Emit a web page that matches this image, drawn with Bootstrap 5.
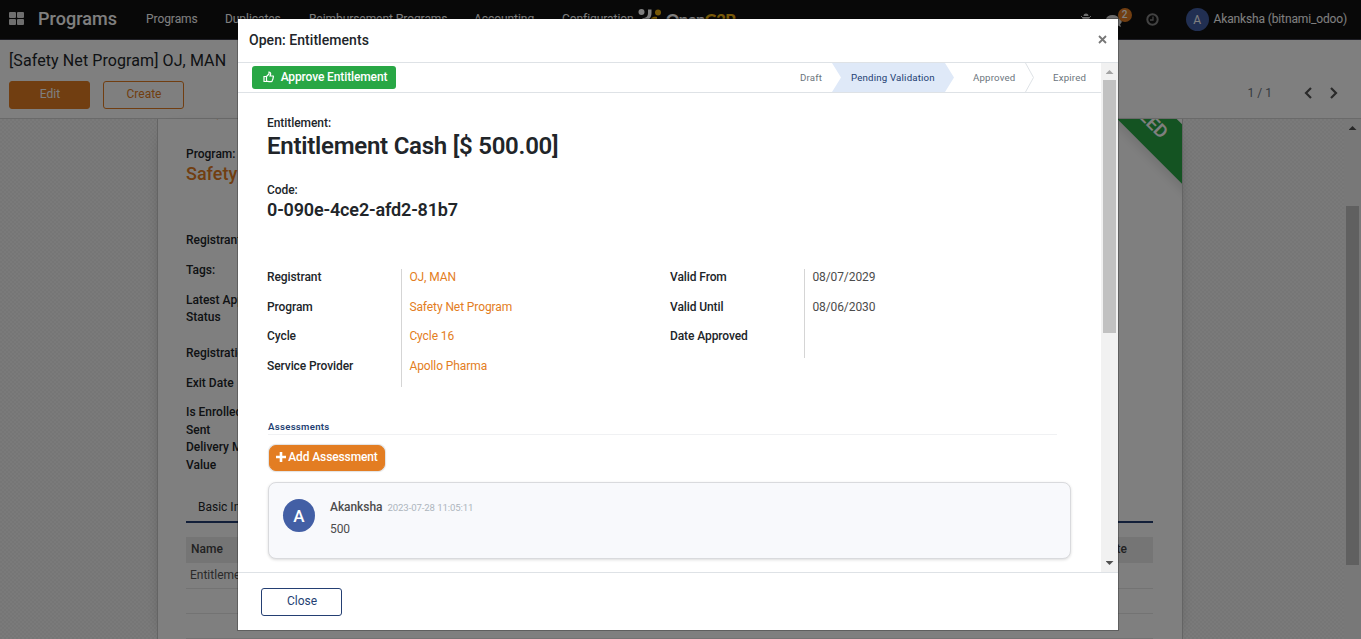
<!DOCTYPE html>
<html lang="en">
<head>
<meta charset="utf-8">
<meta name="viewport" content="width=device-width, initial-scale=1">
<title>Programs - Entitlements</title>
<link href="https://cdn.jsdelivr.net/npm/bootstrap@5.3.0/dist/css/bootstrap.min.css" rel="stylesheet">
<style>
:root{--brand:#e37d22;--navy:#243f73;--line:#dee2e6}
body{font-family:Roboto,"Liberation Sans",sans-serif;font-size:12px;line-height:18px;color:#212529;height:639px;overflow:hidden}
svg{display:block;flex:none}
a{text-decoration:none}
/* top bar */
.topbar{height:40px;background:#101010;border-bottom:1px solid #3a3a48;color:#fff;font-size:12px;padding:0 14px 2px 9px}
.apps{width:15px;margin-right:14px}
.brandname{font-size:18px;font-weight:500;width:108px;letter-spacing:.05px}
.m1{width:79px}.m2{width:84px}.m3{width:165px}.m4{width:88px}.m5{width:76px}
.m1,.m2,.m3,.m4,.m5{letter-spacing:-.06px}
.logotext{font-family:Lato,sans-serif;font-weight:900;font-size:16.5px;letter-spacing:-.5px;margin-left:4px;padding-top:2px}
.gold{color:#f0b310}
.face{border-radius:50%;background:#435fa5;color:#fff;display:flex;align-items:center;justify-content:center;flex:none}
.face-sm{width:23px;height:23px;font-size:12px;margin:2px 5px 0 27px}
.userlabel{letter-spacing:-.14px}
.bug{margin-top:1px}
.chat{position:relative;width:18px;margin:7px 15px 0 14px}
.chat svg{margin-top:-1px}
.pill{position:absolute;left:12px;top:-8px;width:14px;height:14px;border-radius:7px;background:var(--brand);font-size:10px;font-weight:500;line-height:14px;text-align:center}
.clock{margin:2px 0 0 7px}
/* control panel */
.panel{height:79px;background:#fff;border-bottom:1px solid #d5d5d5;padding:10px 22px 0 9px}
.crumb{font-size:16px;line-height:22px;margin-bottom:9px;letter-spacing:.09px}
.btn{--bs-btn-font-size:12px;--bs-btn-border-radius:3px;line-height:16px}
.btn-brand,.btn-brand:hover{background:var(--brand);border-color:var(--brand);color:#fff}
.btn-line{border-color:var(--brand);color:var(--brand);margin-left:13px}
.btn-w{width:81px;height:28px;padding:3px 0 5px 1px}
/* record behind the dialog */
.stage{height:520px;background-color:#f4f4f4;background-image:conic-gradient(#ededed 25%,#f5f5f5 0 50%,#ededed 0 75%,#f5f5f5 0);background-size:4px 4px}
.paper{width:1026px;margin-left:157px;background:#fff;border:solid #c8c8c8;border-width:0 1px;padding:0 29px 0 28px;overflow:hidden;position:relative;box-shadow:0 5px 20px -15px #000}
.wm{font-weight:500}
.tight{letter-spacing:-.06px}
.head24{font-size:24px;font-weight:500;line-height:30px;margin-top:-26px;color:var(--brand)}
.head18{font-size:18px;font-weight:500;line-height:22px;color:var(--brand)}
.ribbon{position:absolute;left:855px;top:-35px;width:240px;height:42px;background:#28a745;color:#fff;transform:rotate(45deg);text-align:center;font-size:18px;line-height:39px;font-weight:600;box-shadow:0 5px 10px rgba(0,0,0,.1)}
.rec>div{line-height:17.5px}
.tabs{border-bottom:2px solid var(--navy);margin-top:18px}
.tabs span{padding:6px 12px 5px}
.list{margin-top:14px;font-size:12px}
.list th{background:#ebebeb;height:26px;padding:2px 5px 4px;font-weight:500;color:#444}
.list td{height:25px;padding:3px 4px;border-bottom:1px solid #e6e6e6;color:#555}
/* drawn scroll bars */
.sbar{width:17px;background:#f1f1f1;padding:0 2px;flex:none}
.thumb{background:#c1c1c1}
.tri-u,.tri-d{width:8px;height:4px;margin:0 auto;background:#a3a3a3;clip-path:polygon(50% 0,100% 100%,0 100%)}
.tri-d{clip-path:polygon(0 0,100% 0,50% 100%);background:#505050}
/* dialog */
.modal-dialog.entitle{width:882px;max-width:882px;margin:18px 0 0 237px}
.entitle .modal-content{border-radius:0;border:1px solid rgba(0,0,0,.25)}
.entitle .modal-header{height:44px;padding:0 11px 2px 11px;border-radius:0}
.entitle .modal-title{font-size:14px;font-weight:500;line-height:20px;letter-spacing:.05px}
.entitle .modal-body{height:509px;padding:0}
.entitle .modal-footer{height:58px;padding:0 0 0 23px;border-radius:0;justify-content:flex-start;align-items:center}
.entitle .modal-footer>*{margin:0}
.btn-navy{border-color:var(--navy);color:var(--navy)}
.status{height:30px;border-bottom:1px solid var(--line);padding-left:14px}
.btn-ok{width:144px;height:23px;padding:0 0 2px 2px;background:#28a745;color:#fff;letter-spacing:-.12px}
.steps{font-size:9.7px;color:#6c757d;height:29px;letter-spacing:.18px}
.steps>*{height:29px;display:flex;align-items:center}
.cur{background:#dfe9f8;color:var(--navy);width:122px;padding-left:19px;clip-path:polygon(0 0,113px 0,100% 50%,113px 100%,0 100%,9px 50%)}
.view{padding:21px 30px 0 29px}
.big{font-size:24px;line-height:30px;margin-top:-1px;font-weight:600;letter-spacing:-.25px}
.code{font-size:18px;line-height:24px;margin-top:-1px;font-weight:600;letter-spacing:-.15px}
.fields{grid-template-columns:403px 1fr;height:148px;margin-top:47px}
.pairs{display:grid;grid-template-columns:135px 1fr;align-self:start;letter-spacing:-.09px;line-height:16px}
.pairs .keys{border-right:1px solid #d5d5d5}
.pairs .keys>*,.pairs .vals>*{display:block;height:29.6px}
.pairs .vals{padding-left:7.400px;color:#4c4c4c}
.vals a{color:var(--brand)}
.sect{font-size:9.6px;font-weight:600;line-height:14px;color:var(--navy);border-bottom:1px solid #f0f1f3;width:789px;margin:3px 0 0 1px;letter-spacing:.3px}
.btn-add{width:116px;height:26px;padding:0 0 2px;--bs-btn-border-radius:7px;margin:10px 0 11px 2px;box-shadow:0 0 1px 1px rgba(0,0,0,.12);letter-spacing:-.12px}
.note{width:803px;height:77px;margin-left:1px;border:1px solid #d9dadd;border-radius:8px;background:#f8f9fc;padding:15px 14px;box-shadow:0 1px 3px rgba(0,0,0,.14);color:#4c4c4c}
.face-lg{width:32px;height:33px;font-size:17px;font-weight:500;margin:1px 15px 0 0}
.when{font-size:9.6px;color:#adb5bd;margin-left:5px;letter-spacing:-.1px}
</style>
<script src="https://cdn.jsdelivr.net/npm/bootstrap@5.3.0/dist/js/bootstrap.bundle.min.js"></script>
</head>
<body>
<nav class="topbar d-flex align-items-center">
  <svg class="apps" width="15" height="13" viewBox="0 0 15 13" fill="#ddd"><rect width="7" height="6" rx="1"/><rect x="8" width="7" height="6" rx="1"/><rect y="7" width="7" height="6" rx="1"/><rect x="8" y="7" width="7" height="6" rx="1"/></svg>
  <span class="brandname">Programs</span>
  <span class="m1">Programs</span><span class="m2">Duplicates</span><span class="m3">Reimbursement Programs</span><span class="m4">Accounting</span><span class="m5">Configuration</span>
  <svg width="24" height="24" viewBox="0 0 24 24"><circle cx="3.500" cy="5" r="3" fill="#fff"/><circle cx="20" cy="5.500" r="3" fill="#f0b310"/><path d="M10 2.500h3.500V6c0 5-3 8-9 8v-3c4 0 5.500-2 5.500-5z" fill="#fff"/><path d="M12 16c0-4 2-7 7-6-.5 2 1 3.500 4 3.500V16z" fill="#f0b310"/></svg>
  <span class="logotext">Open<span class="gold">G2P</span></span>
  <div class="d-flex align-items-center ms-auto">
    <svg class="bug" width="12" height="13" viewBox="0 0 12 13" fill="#ddd"><path d="M3.500 3a2.500 2.500 0 0 1 5 0zM2.500 4h7v7a3.500 2 0 0 1-7 0z"/><path d="M1 3l2 2h6l2-2M0 7.500h12M1 12l2-2h6l2 2" stroke="#ddd" fill="none"/></svg>
    <span class="chat"><svg width="16" height="13" viewBox="0 0 16 13" fill="#ddd"><ellipse cx="6.500" cy="4.500" rx="6.500" ry="4.500"/><path d="M13 3c4 2 3 5 1 6l1 3-4-2-4-1c4 0 6-3 6-6z"/></svg><span class="pill">2</span></span>
    <svg class="clock" width="13" height="13" viewBox="0 0 13 13" fill="none" stroke="#858585"><circle cx="6.500" cy="6.500" r="5.200" stroke-width="2"/><path d="M7 3.500V7H4" stroke-width="1.300"/></svg>
    <span class="face face-sm">A</span><span class="userlabel">Akanksha (bitnami_odoo)</span>
  </div>
</nav>
<header class="panel">
  <div class="crumb">[Safety Net Program] OJ, MAN</div>
  <div class="d-flex align-items-center">
    <button class="btn btn-brand btn-w">Edit</button><button class="btn btn-line btn-w">Create</button>
    <span class="ms-auto text-secondary mb-1">1 / 1</span>
    <svg class="mb-1" style="margin-left:32px" width="9" height="12" viewBox="0 0 9 12" fill="none" stroke="#555" stroke-width="2.200"><path d="M7 1L2 6l5 5"/></svg>
    <svg class="mb-1" style="margin-left:16px" width="10" height="12" viewBox="0 0 10 12" fill="none" stroke="#555" stroke-width="2.200"><path d="M2 1l5 5-5 5"/></svg>
  </div>
</header>
<main class="stage d-flex">
  <section class="paper">
    <div class="ribbon">ENROLLED</div>
    <div class="head24">OJ, MAN</div>
    <div class="wm" style="margin-top:22px">Program:</div>
    <div class="head18">Safety Net Program</div>
    <div class="rec wm">
      <div style="margin-top:47px">Registrant:</div>
      <div style="margin-top:12px">Tags:</div>
      <div style="margin-top:12.5px">Latest Application<br>Status</div>
      <div style="margin-top:18px">Registration Date</div>
      <div style="margin-top:12.5px">Exit Date</div>
      <div style="margin-top:12px">Is Enrolled Message<br>Sent<br>Delivery Mechanism<br>Value</div>
    </div>
    <div class="tabs d-flex"><span>Basic Information</span></div>
    <table class="list w-100">
      <thead><tr><th>Name</th><th class="text-end" style="padding-right:26px">End Date</th></tr></thead>
      <tbody><tr><td>Entitlement Cash</td><td></td></tr><tr><td></td><td></td></tr><tr><td></td><td></td></tr></tbody>
    </table>
  </section>
  <div class="sbar ms-auto"><div class="tri-u" style="margin-top:7px;background:#505050"></div><div class="thumb" style="height:359px;margin-top:76px"></div></div>
</main>

<div class="modal-backdrop show"></div>
<div class="modal d-block overflow-hidden" tabindex="-1" role="dialog">
  <div class="modal-dialog entitle">
    <div class="modal-content">
      <div class="modal-header">
        <h4 class="modal-title">Open: Entitlements</h4>
        <svg width="9" height="9" viewBox="0 0 9 9" stroke="#777" stroke-width="1.800"><path d="M1 1l7 7M8 1L1 8"/></svg>
      </div>
      <div class="modal-body d-flex">
        <div class="flex-grow-1">
          <div class="status d-flex align-items-center">
            <button class="btn btn-ok d-flex align-items-center justify-content-center wm"><svg style="margin-right:7px" width="11" height="12" viewBox="0 0 11 12" fill="none" stroke="#fff" stroke-width="1.200"><path d="M1 5.500h2.500v5H1zM3.500 5.500L6 3V1c2 0 2 2 1 4h3.200c.5 1 0 1.500-.2 2 .2 1-.2 1.500-.6 2 0 1-.4 1.500-1 1.700H6l-2.500-.5"/></svg>Approve Entitlement</button>
            <div class="steps d-flex ms-auto">
              <span style="width:32px">Draft</span><span class="cur">Pending Validation</span><span style="width:71px;padding-left:19px">Approved</span>
              <svg width="9" height="29" viewBox="0 0 9 29" fill="none" stroke="#dee2e6"><path d="M.5 0l8 14.500-8 14.500"/></svg><span style="width:67px;padding-left:19px">Expired</span>
            </div>
          </div>
          <div class="view">
            <div class="wm tight">Entitlement:</div>
            <div class="big">Entitlement Cash [$ 500.00]</div>
            <div class="wm tight" style="margin-top:20px">Code:</div>
            <div class="code">0-090e-4ce2-afd2-81b7</div>
            <div class="fields d-grid">
              <div class="pairs"><div class="keys wm"><span>Registrant</span><span>Program</span><span>Cycle</span><span>Service Provider</span></div>
                <div class="vals"><a href="#">OJ, MAN</a><a href="#">Safety Net Program</a><a href="#">Cycle 16</a><a href="#">Apollo Pharma</a></div></div>
              <div class="pairs"><div class="keys wm"><span>Valid From</span><span>Valid Until</span><span>Date Approved</span></div>
                <div class="vals"><span>08/07/2029</span><span>08/06/2030</span></div></div>
            </div>
            <div class="sect">Assessments</div>
            <button class="btn btn-brand btn-add wm d-flex align-items-center justify-content-center"><svg width="10" height="10" viewBox="0 0 10 10" stroke="#fff" stroke-width="2.600" style="margin-right:2px"><path d="M5 0v10M0 5h10"/></svg>Add Assessment</button>
            <div class="note d-flex">
              <span class="face face-lg">A</span>
              <div class="tight"><div><span class="wm">Akanksha</span><span class="when">2023-07-28 11:05:11</span></div><div style="margin-top:3px">500</div></div>
            </div>
          </div>
        </div>
        <div class="sbar d-flex flex-column"><div class="tri-u" style="margin-top:7px"></div><div class="thumb" style="height:253px;margin-top:6px"></div><div class="tri-d mt-auto" style="margin-bottom:7px"></div></div>
      </div>
      <div class="modal-footer"><button class="btn btn-navy btn-w">Close</button></div>
    </div>
  </div>
</div>
</body>
</html>
